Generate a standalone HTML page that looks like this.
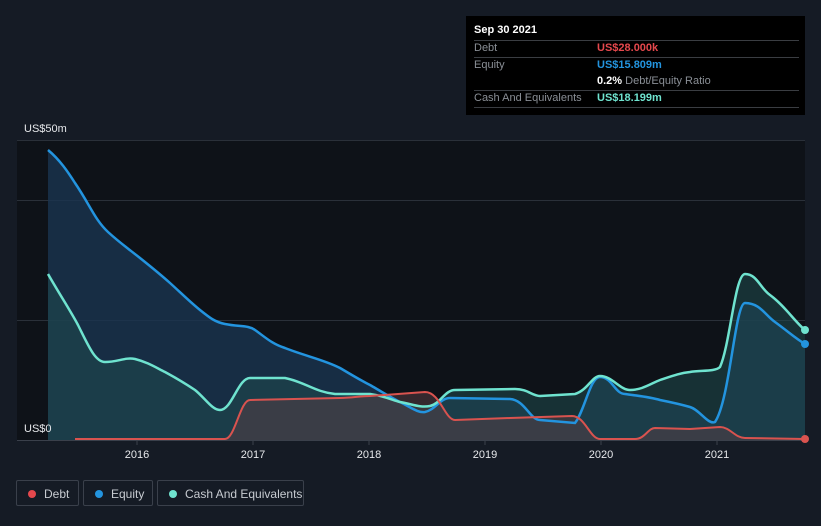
<!DOCTYPE html>
<html><head><style>
body{margin:0;width:821px;height:526px;background:#151b25;font-family:"Liberation Sans",sans-serif;overflow:hidden;position:relative}
.tip{position:absolute;left:466px;top:16px;width:339px;height:99px;background:#000}
.tip .r{position:absolute;left:8px;width:325px;font-size:11px;color:#8a8f96}
.tip .v{position:absolute;left:123px;font-weight:bold}
.ln{position:absolute;left:8px;width:325px;height:1px;background:#3a3d42}
.lg{position:absolute;top:480px;height:26px;border:1px solid #3a404b;border-radius:2px;color:#c7cbd1;font-size:12px;line-height:26px;box-sizing:border-box}
.lg i{position:absolute;left:11px;top:9px;width:8px;height:8px;border-radius:50%}
.lg span{position:absolute;left:27px;top:0}
</style></head><body>
<svg width="821" height="526" style="position:absolute;left:0;top:0">
<rect x="17" y="140" width="788" height="300" fill="#0e1218"/>
<g stroke="#2a3039" stroke-width="1">
<line x1="17" y1="140.5" x2="805" y2="140.5"/><line x1="17" y1="200.5" x2="805" y2="200.5"/><line x1="17" y1="320.5" x2="805" y2="320.5"/>
</g>
<path d="M48,150 C60,160 68,172 75,183 C90,205 95,220 108,232 C120,243 130,250 140,258 C150,266 160,274 170,283 C180,292 190,302 200,310 C210,318 215,322 225,324 C240,327 248,325 255,330 C265,337 272,344 285,348 C305,356 325,360 340,368 C352,375 360,380 370,385 C382,392 392,398 400,402 C412,408 418,413 425,412 C435,410 440,398 450,398 L510,399 C525,400 530,420 540,420 L575,423 C585,410 590,377 600,377 C612,377 615,394 625,394 C640,396 650,397 660,400 C675,403 683,405 690,407 C700,410 708,425 715,422 C730,400 735,303 745,303 C760,303 765,315 775,322 C790,333 795,338 805,344 L805,440 L48,440 Z" fill="#1a3550" fill-opacity="0.8"/>
<path d="M48,274 C60,295 70,310 78,325 C88,345 95,362 105,362 C118,362 125,357 135,359 C147,362 155,367 165,372 C178,379 186,384 195,390 C205,398 212,410 220,410 C232,410 238,378 250,378 L285,378 C305,382 315,392 335,394 L370,394 C385,396 392,400 400,402 C412,404 420,408 430,406 C440,404 445,390 455,390 L515,389 C528,389 532,396 540,396 L575,394 C588,390 592,376 600,376 C612,376 620,390 630,390 C642,390 650,384 660,380 C672,376 680,373 690,372 C700,370 715,372 720,367 C730,345 735,274 745,274 C757,274 760,288 770,295 C785,306 795,322 805,330 L805,440 L48,440 Z" fill="#1f4a4f" fill-opacity="0.55"/>
<path d="M75,439 L225,439 C235,439 240,400 250,400 L340,398 C352,398 360,396 370,396 L425,392 C440,392 445,420 455,420 L510,418 L572,416 C585,416 590,439 600,439 L635,439 C645,439 648,428 655,428 L690,429 L720,427 C730,427 735,438 745,438 L805,439 L805,440 L75,440Z" fill="#5a3e44" fill-opacity="0.5"/>
<path d="M48,150 C60,160 68,172 75,183 C90,205 95,220 108,232 C120,243 130,250 140,258 C150,266 160,274 170,283 C180,292 190,302 200,310 C210,318 215,322 225,324 C240,327 248,325 255,330 C265,337 272,344 285,348 C305,356 325,360 340,368 C352,375 360,380 370,385 C382,392 392,398 400,402 C412,408 418,413 425,412 C435,410 440,398 450,398 L510,399 C525,400 530,420 540,420 L575,423 C585,410 590,377 600,377 C612,377 615,394 625,394 C640,396 650,397 660,400 C675,403 683,405 690,407 C700,410 708,425 715,422 C730,400 735,303 745,303 C760,303 765,315 775,322 C790,333 795,338 805,344" fill="none" stroke="#2394df" stroke-width="2.5"/>
<path d="M48,274 C60,295 70,310 78,325 C88,345 95,362 105,362 C118,362 125,357 135,359 C147,362 155,367 165,372 C178,379 186,384 195,390 C205,398 212,410 220,410 C232,410 238,378 250,378 L285,378 C305,382 315,392 335,394 L370,394 C385,396 392,400 400,402 C412,404 420,408 430,406 C440,404 445,390 455,390 L515,389 C528,389 532,396 540,396 L575,394 C588,390 592,376 600,376 C612,376 620,390 630,390 C642,390 650,384 660,380 C672,376 680,373 690,372 C700,370 715,372 720,367 C730,345 735,274 745,274 C757,274 760,288 770,295 C785,306 795,322 805,330" fill="none" stroke="#6fe3cf" stroke-width="2.5"/>
<path d="M75,439 L225,439 C235,439 240,400 250,400 L340,398 C352,398 360,396 370,396 L425,392 C440,392 445,420 455,420 L510,418 L572,416 C585,416 590,439 600,439 L635,439 C645,439 648,428 655,428 L690,429 L720,427 C730,427 735,438 745,438 L805,439" fill="none" stroke="#d9534f" stroke-width="2"/>
<line x1="17" y1="440.5" x2="805" y2="440.5" stroke="#3a404b"/>
<g stroke="#3a404b"><line x1="137" y1="440" x2="137" y2="445"/><line x1="253" y1="440" x2="253" y2="445"/><line x1="369" y1="440" x2="369" y2="445"/><line x1="485" y1="440" x2="485" y2="445"/><line x1="601" y1="440" x2="601" y2="445"/><line x1="717" y1="440" x2="717" y2="445"/></g>
<circle cx="805" cy="330" r="4" fill="#6fe3cf"/><circle cx="805" cy="344" r="4" fill="#2394df"/><circle cx="805" cy="439" r="4" fill="#d9534f"/>
<g fill="#e6e8eb" font-size="11" font-family="Liberation Sans" text-anchor="middle">
<text x="137" y="458">2016</text><text x="253" y="458">2017</text><text x="369" y="458">2018</text><text x="485" y="458">2019</text><text x="601" y="458">2020</text><text x="717" y="458">2021</text>
</g>
<text x="24" y="132" fill="#e6e8eb" font-size="11">US$50m</text>
<text x="24" y="432" fill="#e6e8eb" font-size="11">US$0</text>
</svg>
<div class="tip">
<div class="r" style="top:8px;color:#fff;font-weight:bold">Sep 30 2021</div>
<div class="ln" style="top:24px"></div>
<div class="r" style="top:26px">Debt<span class="v" style="color:#e5484d">US$28.000k</span></div>
<div class="ln" style="top:41px"></div>
<div class="r" style="top:43px">Equity<span class="v" style="color:#2394df">US$15.809m</span></div>
<div class="r" style="top:59px"><span class="v" style="left:123px;color:#fff">0.2% <span style="color:#8a8f96;font-weight:normal;position:static">Debt/Equity Ratio</span></span></div>
<div class="ln" style="top:74px"></div>
<div class="r" style="top:76px">Cash And Equivalents<span class="v" style="color:#6fe3cf">US$18.199m</span></div>
<div class="ln" style="top:91px"></div>
</div>
<div class="lg" style="left:16px;width:63px"><i style="background:#e5484d"></i><span>Debt</span></div>
<div class="lg" style="left:83px;width:70px"><i style="background:#2394df"></i><span>Equity</span></div>
<div class="lg" style="left:157px;width:147px"><i style="background:#6fe3cf"></i><span>Cash And Equivalents</span></div>
</body></html>
